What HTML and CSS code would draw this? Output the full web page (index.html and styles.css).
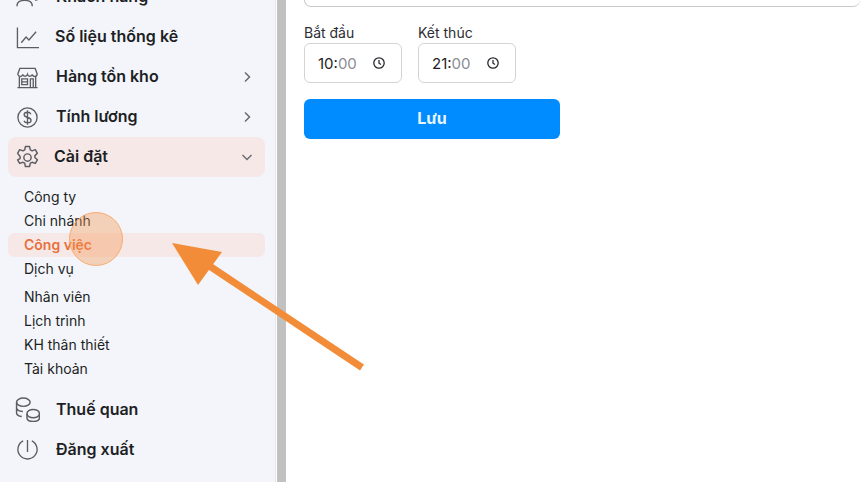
FILE: index.html
```html
<!DOCTYPE html>
<html lang="en">
<head>
    <meta charset="UTF-8">
    <title>Cài đặt công việc</title>
    <link rel="stylesheet" href="styles.css">
</head>
<body>
    <div class="app">
        <aside class="sidebar">
            <nav class="menu">
                <a class="menu-item">
                    <svg class="menu-icon" viewBox="0 0 24 24"><circle cx="9" cy="7" r="5"/><path d="M1 21c0-4 3-6 8-6s8 2 8 6M20 15l3-1"/></svg>
                    <span class="menu-label">Khách hàng</span>
                </a>
                <a class="menu-item menu-item-stats">
                    <svg class="menu-icon" viewBox="0 0 24 24"><path d="M1.500 1.500V22.500H24"/><path d="M5.500 17.500l5-6 3 3L21 6"/></svg>
                    <span class="menu-label">Số liệu thống kê</span>
                </a>
                <a class="menu-item">
                    <svg class="menu-icon" viewBox="0 0 24 24"><path d="M4 2.500h16l2 5.500a2.500 2.500 0 0 1-5 .8 2.600 2.600 0 0 1-5 0 2.600 2.600 0 0 1-5 0 2.500 2.500 0 0 1-5-.8z"/><path d="M3.500 11v11.500h17V11M1.500 22.500h21"/><path d="M6 13.500h6v6H6zM6 16.500h6M15 22v-8.500h3V22"/></svg>
                    <span class="menu-label">Hàng tồn kho</span>
                    <svg class="chevron" viewBox="0 0 12 12"><path d="M4 1.500L8.500 6 4 10.500"/></svg>
                </a>
                <a class="menu-item">
                    <svg class="menu-icon" viewBox="0 0 24 24"><circle cx="12" cy="12" r="10"/><path d="M15.500 8.500c-.5-1.300-2-2-3.500-2-2 0-3.500 1-3.500 2.700 0 3.600 7.200 2 7.200 5.600 0 1.800-1.700 2.700-3.700 2.700-1.700 0-3.200-.8-3.700-2.200M12 4.500v15"/></svg>
                    <span class="menu-label">Tính lương</span>
                    <svg class="chevron" viewBox="0 0 12 12"><path d="M4 1.500L8.500 6 4 10.500"/></svg>
                </a>
                <a class="menu-item menu-item-open">
                    <svg class="menu-icon menu-icon-large" viewBox="0 0 24 24"><circle cx="12" cy="12" r="3.500"/><path d="M10 1.500h4l.7 3.200 1.700.9 3.100-1.100 2 3.500-2.400 2.200v1.800l2.400 2.200-2 3.500-3.100-1.100-1.700.9-.7 3.200h-4l-.7-3.200-1.700-.9-3.100 1.100-2-3.500L4.900 13v-2L2.500 8l2-3.500 3.100 1.100 1.700-.9z"/></svg>
                    <span class="menu-label">Cài đặt</span>
                    <svg class="chevron" viewBox="0 0 12 12"><path d="M1.500 4L6 8.500 10.500 4"/></svg>
                </a>
                <div class="submenu">
                    <a class="submenu-item">Công ty</a>
                    <a class="submenu-item">Chi nhánh</a>
                    <a class="submenu-item submenu-item-active">Công việc</a>
                    <a class="submenu-item">Dịch vụ</a>
                </div>
                <div class="submenu submenu-second">
                    <a class="submenu-item">Nhân viên</a>
                    <a class="submenu-item">Lịch trình</a>
                    <a class="submenu-item">KH thân thiết</a>
                    <a class="submenu-item">Tài khoản</a>
                </div>
                <a class="menu-item menu-item-tax">
                    <svg class="menu-icon menu-icon-large" viewBox="0 0 24 24"><ellipse cx="8" cy="5" rx="6.500" ry="4"/><path d="M1.500 5v10c0 1.800 2.200 3.300 5 3.800M1.500 10c0 2 2.500 3.700 6 4"/><ellipse cx="17.500" cy="16" rx="6" ry="4"/><path d="M11.500 16v4c0 2.200 2.700 3.500 6 3.500s6-1.300 6-3.500v-4"/></svg>
                    <span class="menu-label">Thuế quan</span>
                </a>
                <a class="menu-item menu-item-logout">
                    <svg class="menu-icon" viewBox="0 0 24 24"><path d="M7.500 3a10 10 0 1 0 9 0M12 2v12.500"/></svg>
                    <span class="menu-label">Đăng xuất</span>
                </a>
            </nav>
        </aside>

        <div class="scrollbar"></div>

        <main class="content">
            <div class="text-input"></div>
            <div class="time-row">
                <div class="time-field">
                    <label class="time-label">Bắt đầu</label>
                    <div class="time-box">
                        <span class="time-value">10:<span class="time-muted">00</span></span>
                        <svg class="clock" viewBox="0 0 14 14"><circle cx="7" cy="7" r="5.200"/><path d="M7 4v3.200l2 1.300"/></svg>
                    </div>
                </div>
                <div class="time-field">
                    <label class="time-label">Kết thúc</label>
                    <div class="time-box">
                        <span class="time-value">21:<span class="time-muted">00</span></span>
                        <svg class="clock" viewBox="0 0 14 14"><circle cx="7" cy="7" r="5.200"/><path d="M7 4v3.200l2 1.300"/></svg>
                    </div>
                </div>
            </div>
            <button class="save-button">Lưu</button>
        </main>
    </div>

    <!-- tutorial overlay -->
    <div class="click-marker"></div>
    <svg class="arrow" viewBox="0 0 860 482">
        <path class="arrow-shaft" d="M362 367.500L205 263"/>
        <path class="arrow-head" d="M172 243L222 252 198 285z"/>
    </svg>
</body>
</html>
```

FILE: styles.css
```css
* {
    margin: 0;
    padding: 0;
    box-sizing: border-box;
    font-family: Inter, "Noto Sans", sans-serif;
}

body {
    background: #fff;
    color: #1d1f24;
    height: 482px;
    overflow: hidden;
}

.app {
    display: flex;
    height: 482px;
}

.sidebar {
    width: 276px;
    flex-shrink: 0;
    background: #f3f5fa;
    border-right: 1px solid #e6e7ea;
    overflow: hidden;
    padding: 0 10px 0 8px;
}

.menu {
    margin-top: -23px;
}

.menu-item {
    display: flex;
    align-items: center;
    height: 40px;
    padding: 0 12px 0 8px;
    border-radius: 8px;
}

.menu-icon {
    width: 23px;
    height: 23px;
    flex-shrink: 0;
    fill: none;
    stroke: #5b5d63;
    stroke-width: 1.4;
}

.menu-icon-large {
    width: 25px;
    height: 25px;
    margin: 0 -1px;
    stroke-linejoin: round;
}

.menu-label {
    flex: 1;
    margin-left: 17px;
    font-size: 16px;
    font-weight: 600;
    line-height: 19px;
    padding-bottom: 1px;
}

.menu-item-stats .menu-label {
    margin-left: 16px;
}

.menu-item-open {
    background: #f7e8e8;
}

.menu-item-open .menu-label {
    margin-left: 15px;
}

.menu-item-tax .menu-label {
    margin-left: 17px;
    padding-bottom: 0;
}

.menu-item-logout .menu-label {
    padding-bottom: 0;
}

.chevron {
    width: 12px;
    height: 12px;
    fill: none;
    stroke: #6a6c72;
    stroke-width: 1.5;
}

.submenu {
    font-size: 14px;
}

.submenu:first-of-type {
    margin-top: 8px;
}

.submenu-second {
    margin-top: 4px;
    margin-bottom: 8px;
}

.submenu-item {
    display: block;
    height: 24px;
    line-height: 24px;
    padding-left: 16px;
    border-radius: 6px;
}

.submenu-item-active {
    background: #f7e8e8;
    color: #e8703a;
    font-weight: 600;
}

.scrollbar {
    width: 9px;
    margin-left: 1px;
    flex-shrink: 0;
    background: #c1c1c1;
}

.content {
    flex: 1;
    padding-left: 18px;
}

.text-input {
    height: 7px;
    border: 1px solid #c9c9c9;
    border-top: none;
    border-radius: 0 0 8px 8px;
    border-right: none;
    margin-bottom: 16px;
}

.time-row {
    display: flex;
    gap: 16px;
}

.time-label {
    display: block;
    height: 20px;
    line-height: 19px;
    font-size: 14px;
    color: #2c2e33;
}

.time-box {
    display: flex;
    align-items: center;
    justify-content: space-between;
    width: 98px;
    height: 40px;
    padding: 0 15px 0 13px;
    border: 1px solid #d4d4d6;
    border-radius: 6px;
}

.time-value {
    font-size: 15px;
}

.time-muted {
    color: #8b8d92;
}

.clock {
    width: 14px;
    height: 14px;
    fill: none;
    stroke: #26282c;
    stroke-width: 1.3;
}

.save-button {
    display: block;
    width: 256px;
    height: 40px;
    margin-top: 16px;
    padding-bottom: 2px;
    background: #008cff;
    color: #e8f5ff;
    border: none;
    border-radius: 6px;
    font-size: 16px;
    font-weight: 700;
}

.click-marker {
    position: absolute;
    left: 69px;
    top: 212px;
    width: 54px;
    height: 54px;
    border-radius: 50%;
    background: rgba(245, 150, 80, 0.38);
    border: 1.5px solid #f9ab70;
}

.arrow {
    position: absolute;
    left: 0;
    top: 0;
    width: 860px;
    height: 482px;
}

.arrow-shaft {
    fill: none;
    stroke: #f28c38;
    stroke-width: 7;
}

.arrow-head {
    fill: #f28c38;
}
```
